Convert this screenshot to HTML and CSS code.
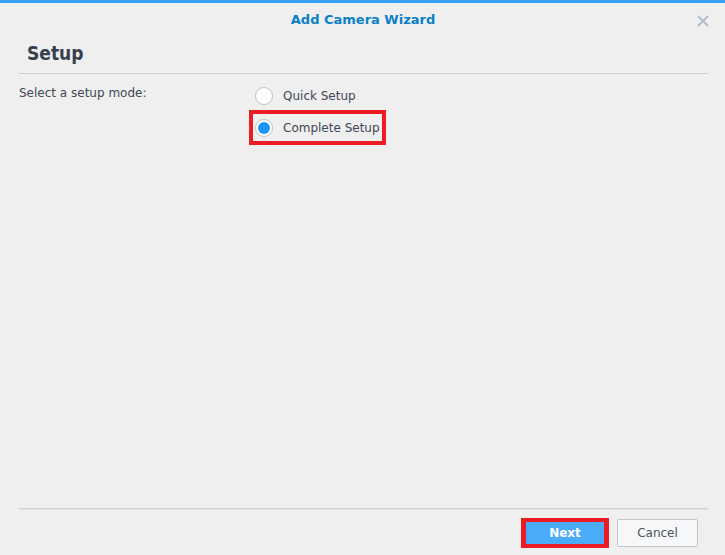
FILE: index.html
```html
<!DOCTYPE html>
<html lang="en">
<head>
    <meta charset="UTF-8" />
    <meta name="viewport" content="width=device-width, initial-scale=1.0" />
    <title>Add Camera Wizard</title>
    <link rel="stylesheet" href="styles.css">
</head>
<body>

    <div class="window">
        <div class="titlebar">
            <span></span>
            <span class="title">Add Camera Wizard</span>
            <button class="close-btn" aria-label="Close">
                <svg width="12" height="12" viewBox="0 0 12 12">
                    <path d="M1 1 L11 11 M11 1 L1 11" stroke="#b3bec8" stroke-width="2" fill="none" />
                </svg>
            </button>
        </div>

        <div class="content">
            <h2 class="step-title">Setup</h2>

            <div class="form-row">
                <div class="field-label">Select a setup mode:</div>
                <div class="options">
                    <label class="option">
                        <span class="radio"></span>
                        <span>Quick Setup</span>
                    </label>
                    <label class="option marked">
                        <span class="radio checked"></span>
                        <span>Complete Setup</span>
                    </label>
                </div>
            </div>
        </div>

        <div class="footer">
            <div class="marked-btn">
                <button class="btn btn-primary">Next</button>
            </div>
            <button class="btn btn-default">Cancel</button>
        </div>
    </div>

</body>
</html>
```

FILE: styles.css
```css
:root {
    --accent: #35a1fb;
    --title: #0b80c6;
    --bg: #efefef;
    --text: #414854;
    --heading: #37404c;
    --mark: #ec1c24;
}

* {
    box-sizing: border-box;
}

body {
    margin: 0;
    padding: 0;
    background: var(--bg);
    color: var(--text);
    font-family: 'DejaVu Sans', Verdana, sans-serif;
    font-size: 12px;
}

.window {
    height: 100vh;
    display: flex;
    flex-direction: column;
    border-top: 3px solid var(--accent);
}

.titlebar {
    height: 33px;
    display: grid;
    grid-template-columns: 1fr auto 1fr;
    align-items: center;
}

    .titlebar .title {
        color: var(--title);
        font-weight: bold;
        font-size: 13px;
        line-height: 33px;
        padding-left: 1px;
    }

.close-btn {
    justify-self: end;
    margin-right: 16px;
    margin-top: 2px;
    padding: 0;
    border: none;
    background: none;
    width: 12px;
    height: 12px;
    display: flex;
}

.content {
    flex: 1;
    margin: 0 17px 0 19px;
}

.step-title {
    margin: 0;
    padding: 4px 0 7px 8px;
    font-family: 'DejaVu Sans Condensed', 'DejaVu Sans', sans-serif;
    font-size: 19px;
    line-height: 26px;
    color: var(--heading);
    border-bottom: 1px solid #cfcfcf;
}

.form-row {
    display: grid;
    grid-template-columns: 233px auto;
    padding-top: 7px;
}

.field-label {
    line-height: 24px;
}

.options {
    display: flex;
    flex-direction: column;
    align-items: flex-start;
    gap: 3px;
}

.option {
    height: 29px;
    display: flex;
    align-items: center;
    gap: 10px;
    padding: 0 3px;
}

    .option.marked {
        outline: 4px solid var(--mark);
        outline-offset: -1px;
    }

.radio {
    width: 18px;
    height: 18px;
    border-radius: 50%;
    border: 1px solid #c4c4c4;
    background: #fff;
    position: relative;
}

    .radio.checked::after {
        content: '';
        position: absolute;
        left: 2px;
        top: 2px;
        width: 12px;
        height: 12px;
        border-radius: 50%;
        background: #1e96f6;
    }

.footer {
    margin: 0 17px 0 19px;
    padding: 9px 10px 7px 0;
    border-top: 1px solid #d2d2d2;
    box-shadow: inset 0 1px #e3e3e3;
    display: flex;
    justify-content: flex-end;
    align-items: center;
    gap: 8px;
}

.marked-btn {
    border: solid var(--mark);
    border-width: 4px 5px;
    display: flex;
}

.btn {
    font-family: 'DejaVu Sans', Verdana, sans-serif;
    font-size: 12px;
    padding: 0;
    cursor: pointer;
}

.btn-primary {
    width: 78px;
    height: 22px;
    border: none;
    background: #4aacf8;
    color: #fff;
    font-weight: bold;
}

.btn-default {
    width: 81px;
    height: 28px;
    border: 1px solid #c6c6c6;
    border-radius: 2px;
    background: #f6f7f9;
    color: #4c535e;
}
```
